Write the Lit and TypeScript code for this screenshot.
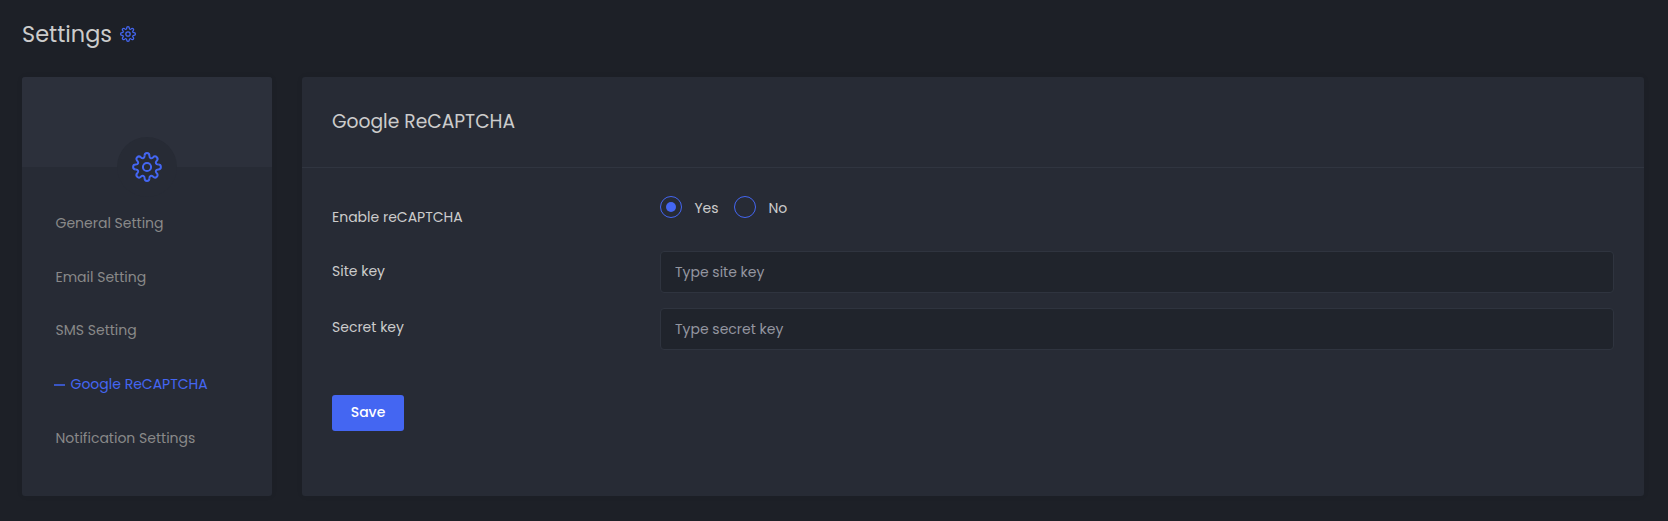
import { LitElement, html, css, svg } from "lit";
import { customElement, property } from "lit/decorators.js";

@customElement("gear-icon")
class GearIcon extends LitElement {
  @property({ type: Number }) stroke = 2;
  static styles = css`
    :host { display: block; color: #4466f2; }
    svg { display: block; width: 100%; height: 100%; overflow: visible; }
  `;
  render() {
    const quarter = svg`
      <path d="M12.6 3.8 C12.6 .2 17.4 .2 17.4 3.8 C17.4 6.2 19.4 6.9 21 5.4 C22.3 4.1 23.6 4 24.8 5.2 C26 6.4 25.9 7.7 24.6 9 C23.1 10.6 23.8 12.6 26.2 12.6"/>`;
    return html`<svg viewBox="0 0 30 30" fill="none" stroke="currentColor" stroke-width=${this.stroke}>
      ${[0, 90, 180, 270].map((a) => svg`<g transform="rotate(${a} 15 15)">${quarter}</g>`)}
      <circle cx="15" cy="15" r="4.1" />
    </svg>`;
  }
}

@customElement("app-root")
class AppRoot extends LitElement {
  static styles = css`
    :host { display: block; height: 521px; box-sizing: border-box; padding: 0 24px 0 22px; background: #1d2027; color: #ccc; font: 14px/24px Poppins, Inter, sans-serif; overflow: hidden; }
    * { box-sizing: border-box; }
    .page-title { display: flex; align-items: center; height: 77px; padding-bottom: 9px; gap: 8px; }
    h1 { margin: 0; font-size: 22.4px; font-weight: 400; line-height: 32px; width: 90px; white-space: nowrap; }
    .small { width: 16px; height: 16px; }
    .layout { display: grid; grid-template-columns: 250px 1342px; gap: 30px; height: 419px; }
    .card { background: #272b35; border-radius: 3px; overflow: hidden; box-shadow: 0 0 6px rgba(0,0,0,.06); }
    .cover { height: 90px; background: #2c303b; display: flex; justify-content: center; padding-top: 60px; }
    .badge { width: 60px; height: 60px; flex: none; border-radius: 50%; background: #272b35; padding: 15px; }
    nav { display: flex; flex-direction: column; gap: 29.7px; padding: 44px 0 0 33.5px; }
    nav a { display: flex; align-items: center; height: 24px; color: #898989; white-space: nowrap; }
    nav a.active { color: #4466f2; }
    nav a.active::before { content: ""; width: 11px; height: 2px; background: #3a56c4; margin: 2px 5.5px 0 -1.5px; }
    header { height: 91px; border-bottom: 1px solid #303540; padding: 29px 30px 0; }
    h2 { margin: 0; font-size: 18.7px; font-weight: 400; line-height: 32px; }
    form { padding: 28px 30px 0; }
    .row { display: grid; grid-template-columns: 328px 1fr; }
    .row.choices { height: 55px; }
    .row.choices > .label { padding-top: 9px; }
    .row.field { height: 57px; }
    .row.field > .label { padding-top: 8px; }
    .row.field.secret > .label { padding-top: 7px; }
    .radios { display: flex; align-items: flex-start; }
    .radio { display: flex; align-items: flex-start; width: 74px; gap: 12.4px; }
    .dot { width: 22px; height: 22px; border: 1px solid #4466f2; border-radius: 50%; display: grid; place-items: center; flex: none; }
    .dot.on::after { content: ""; width: 10px; height: 10px; border-radius: 50%; background: #4466f2; }
    input { height: 42px; width: 100%; margin: 0; border: 1px solid #2f343f; border-radius: 4px; background: #20242c; padding: 0 14px; font: inherit; color: #ccc; outline: none; }
    input::placeholder { color: #9496a0; opacity: 1; }
    button { display: block; margin: 30px 0 0; width: 72px; height: 36px; border: 0; border-radius: 3px; background: #4466f2; color: #fff; font: 500 14px/24px Poppins, Inter, sans-serif; padding: 0 0 2px; }
  `;
  render() {
    const items = ["General Setting", "Email Setting", "SMS Setting", "Google ReCAPTCHA", "Notification Settings"];
    return html`
      <div class="page-title"><h1>Settings</h1><gear-icon class="small" .stroke=${2.4}></gear-icon></div>
      <div class="layout">
        <aside class="card">
          <div class="cover"><div class="badge"><gear-icon></gear-icon></div></div>
          <nav>${items.map((t, i) => html`<a class=${i === 3 ? "active" : ""}><span>${t}</span></a>`)}</nav>
        </aside>
        <main class="card">
          <header><h2>Google ReCAPTCHA</h2></header>
          <form>
            <div class="row choices"><span class="label">Enable reCAPTCHA</span>
              <div class="radios">
                <label class="radio"><span class="dot on"></span><span>Yes</span></label>
                <label class="radio"><span class="dot"></span><span>No</span></label>
              </div></div>
            <div class="row field"><span class="label">Site key</span><input placeholder="Type site key" /></div>
            <div class="row field secret"><span class="label">Secret key</span><input placeholder="Type secret key" /></div>
            <button type="button">Save</button>
          </form>
        </main>
      </div>`;
  }
}
